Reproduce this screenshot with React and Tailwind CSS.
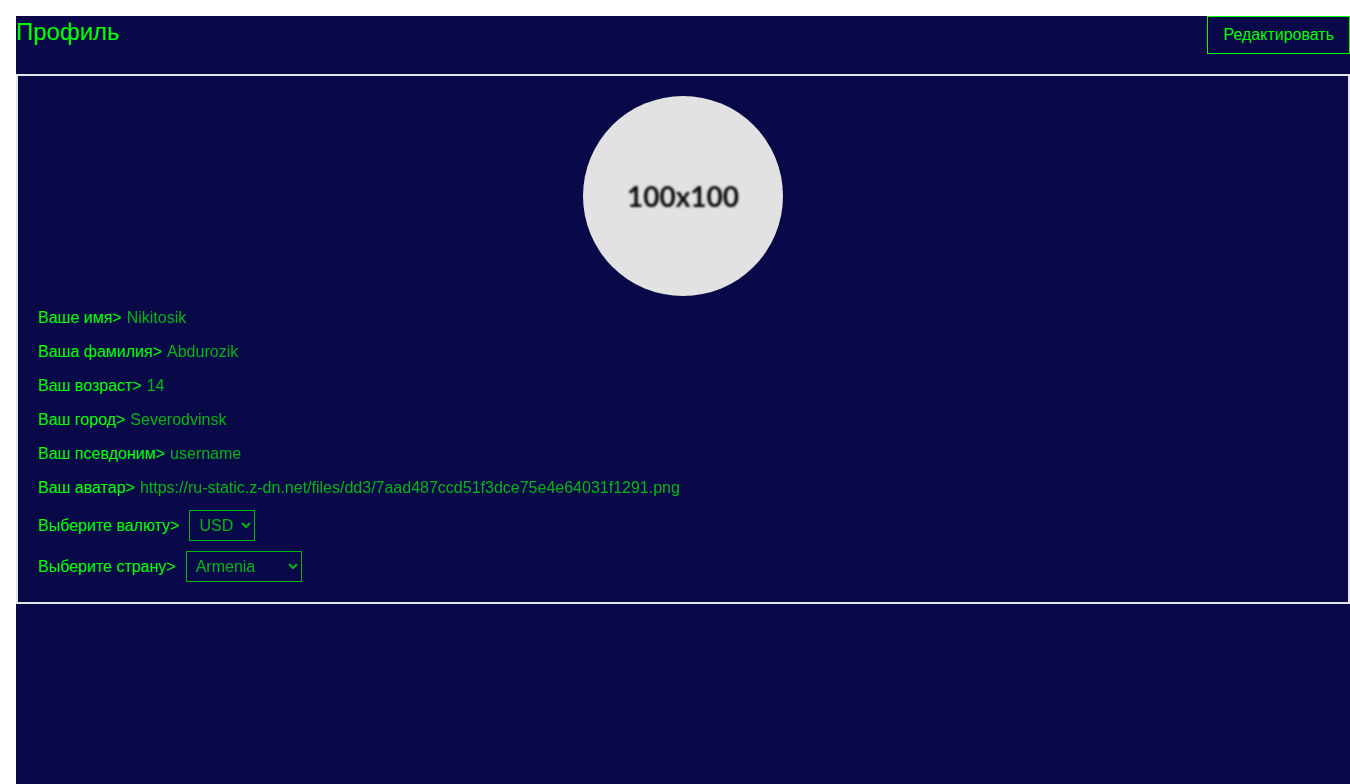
const fields = [
  { id: 'firstname', label: 'Ваше имя', value: 'Nikitosik' },
  { id: 'lastname', label: 'Ваша фамилия', value: 'Abdurozik' },
  { id: 'age', label: 'Ваш возраст', value: '14' },
  { id: 'city', label: 'Ваш город', value: 'Severodvinsk' },
  { id: 'username', label: 'Ваш псевдоним', value: 'username' },
  {
    id: 'avatar',
    label: 'Ваш аватар',
    value: 'https://ru-static.z-dn.net/files/dd3/7aad487ccd51f3dce75e4e64031f1291.png',
  },
];

function TextField({ id, label, value }) {
  return (
    <div className="flex gap-[5px]">
      <label htmlFor={id}>{label}&gt;</label>
      <input
        id={id}
        type="text"
        readOnly
        defaultValue={value}
        className="min-w-0 flex-1 bg-transparent opacity-70 outline-none"
      />
    </div>
  );
}

function SelectField({ id, label, value, options, width }) {
  return (
    <div className="flex items-center gap-2.5">
      <label htmlFor={id}>{label}&gt;</label>
      <select
        id={id}
        disabled
        defaultValue={value}
        className={`border border-[#00ff00] bg-transparent p-[5px] leading-normal text-[#00ff00] opacity-70 ${width}`}
      >
        {options.map((option) => (
          <option key={option}>{option}</option>
        ))}
      </select>
    </div>
  );
}

export default function App() {
  return (
    <div className="flex min-h-screen bg-white pt-4 pl-4 font-['Liberation_Sans',Arial,sans-serif] text-base text-[#00ff00]">
      <main className="min-w-0 flex-1 bg-[#090949]">
        <header className="mb-5 flex items-start justify-between">
          <h1 className="text-2xl">Профиль</h1>
          <button type="button" className="border border-[#00ff00] px-[15px] py-1.5">
            Редактировать
          </button>
        </header>
        <section className="flex flex-col gap-2.5 border-2 border-gray-200 p-5">
          <div className="flex size-[200px] items-center justify-center self-center rounded-full bg-[#e2e2e2]">
            <span className="font-['Lato',sans-serif] text-[28px] font-bold text-[#0a0a0a] blur-[1px]">
              100x100
            </span>
          </div>
          {fields.map((field) => (
            <TextField key={field.id} {...field} />
          ))}
          <SelectField
            id="currency"
            label="Выберите валюту"
            value="USD"
            options={['RUB', 'EUR', 'USD']}
            width="w-[66px]"
          />
          <SelectField
            id="country"
            label="Выберите страну"
            value="Armenia"
            options={['Russia', 'Belarus', 'Ukraine', 'Kazakhstan', 'Armenia']}
            width="w-[116px]"
          />
        </section>
      </main>
    </div>
  );
}
